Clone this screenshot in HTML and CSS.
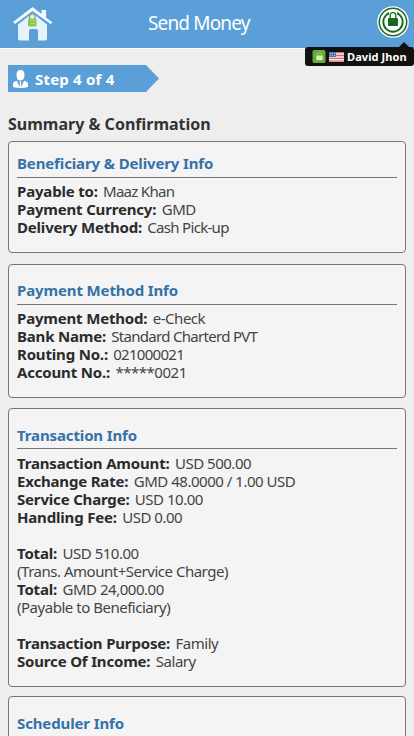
FILE: index.html
```html
<!DOCTYPE html>
<html lang="en">
<head>
<meta charset="utf-8">
<meta name="viewport" content="width=device-width, initial-scale=1">
<title>Send Money</title>
<link rel="stylesheet" href="styles.css">
</head>
<body>
<header class="bar">
  <svg class="home" viewBox="0 0 42 36" aria-label="Home">
    <path d="M6 18.500 20.500 7l14.500 11.500V32.500q0 2-2 2h-7V25q0-2-2-2h-5q-2 0-2 2v9.500H8q-2 0-2-2z" fill="#e6f2fc"/>
    <path d="M1 16 20.500 1 29.500 8V4h4.500v7.500l6.500 5-2 1.500-18-13L3 18z" fill="#f4faff"/>
    <path d="M17.500 13v-2q0-3 2.800-3t2.800 3v2" fill="none" stroke="#8aa58b" stroke-width="1.300"/>
    <rect x="16" y="12.500" width="8.500" height="8" rx="1" fill="#8cc850"/>
    <path d="M18 14.500h5M18 17.500h5" stroke="#a5d66d"/>
  </svg>
  <h1>Send Money</h1>
  <svg class="secure" viewBox="0 0 32 32" aria-label="Secure account">
    <circle cx="16" cy="16" r="15.800" fill="#fff"/>
    <circle cx="16" cy="16" r="13.700" fill="none" stroke="#17691c" stroke-width="1.500"/>
    <circle cx="16" cy="16" r="9.700" fill="none" stroke="#17691c" stroke-width="1.900"/>
    <path d="M12 5h8v9h-8z" fill="#fff"/>
    <rect x="11" y="12" width="10" height="8" rx="1" fill="#17691c"/>
    <path d="M13.200 13V9.500q0-2.800 2.800-2.800t2.800 2.800V13" fill="none" stroke="#17691c" stroke-width="1.300"/>
  </svg>
  <div class="user">
    <svg class="lock" viewBox="0 0 14 14"><rect width="14" height="14" rx="2" fill="#65a936"/><rect x="4" y="6" width="7" height="5" rx="1" fill="#d2f1af"/><path d="M5 6V4q2.500-2 5 0v2" fill="none" stroke="#a4d670"/></svg>
    <svg class="flag" viewBox="0 0 15 10"><path fill="#f3eeee" d="M0 0h15v10H0z"/><path d="M0 .7h15M0 3.500h15M0 6.300h15M0 9.200h15" stroke="#d66b6b" stroke-width="1.300"/><path fill="#5276b8" d="M0 0h7v5H0z"/><path d="M1 1.500h5M1 3.500h5" stroke="#b9c8e6" stroke-width=".7" stroke-dasharray="1 1"/></svg>
    <b>David Jhon</b>
  </div>
</header>
<main>
  <div class="step">
    <svg viewBox="0 0 15 18"><path d="M3.500 5q0-5 4-5t4 5-4 5.500-4-5.500z" fill="#fff"/><path d="M0 17v-3q0-2.500 4-3.300L6.500 17 7 13l-.7-1.500h2.400L8 13l.5 4L11 10.700q4 .8 4 3.300v3q-3 1-7.500 1T0 17z" fill="#fff"/></svg>
    <span>Step 4 of 4</span>
  </div>
  <h2>Summary &amp; Confirmation</h2>
  <section class="card beneficiary">
    <h3>Beneficiary &amp; Delivery Info</h3>
    <p class="tight"><b>Payable to:</b> Maaz Khan</p>
    <p><b>Payment Currency:</b> GMD</p>
    <p class="tight"><b>Delivery Method:</b> Cash Pick-up</p>
  </section>
  <section class="card payment">
    <h3>Payment Method Info</h3>
    <p><b>Payment Method:</b> e-Check</p>
    <p class="tight"><b>Bank Name:</b> Standard Charterd PVT</p>
    <p class="tight"><b>Routing No.:</b> 021000021</p>
    <p><b>Account No.:</b> *****0021</p>
  </section>
  <section class="card transaction">
    <h3>Transaction Info</h3>
    <p><b>Transaction Amount:</b> USD 500.00</p>
    <p><b>Exchange Rate:</b> GMD 48.0000 / 1.00 USD</p>
    <p><b>Service Charge:</b> USD 10.00</p>
    <p><b>Handling Fee:</b> USD 0.00</p>
    <p class="group"><b>Total:</b> USD 510.00</p>
    <p>(Trans. Amount+Service Charge)</p>
    <p><b>Total:</b> GMD 24,000.00</p>
    <p>(Payable to Beneficiary)</p>
    <p class="group"><b>Transaction Purpose:</b> Family</p>
    <p><b>Source Of Income:</b> Salary</p>
  </section>
  <section class="card scheduler">
    <h3>Scheduler Info</h3>
  </section>
</main>
</body>
</html>
```
FILE: styles.css
```css
* { box-sizing: border-box; }
html { height: 100%; overflow: hidden; }
body {
  margin: 0;
  height: 100%;
  overflow: hidden;
  background: #eee;
  color: #333;
  font: 15px/18px "Noto Sans", sans-serif;
}
h1, h2, h3, p { margin: 0; }
.bar {
  position: relative;
  display: flex;
  align-items: flex-start;
  height: 49px;
  padding: 6px 5px 0 12px;
  background: #5b9fd9;
  border-bottom: 1px solid #fff;
}
.home { width: 42px; height: 36px; }
h1 {
  margin-left: 94px;
  color: #fff;
  font-size: 19px;
  font-weight: 400;
  line-height: 34px;
  letter-spacing: -.85px;
}
.secure { width: 32px; height: 32px; margin-left: auto; }
.user {
  position: absolute;
  top: 47px;
  right: 0;
  display: flex;
  align-items: center;
  width: 109px;
  height: 19px;
  padding-left: 7px;
  border-radius: 3px;
  background: #111;
  color: #fff;
  font-size: 11px;
}
.user::before {
  content: "";
  position: absolute;
  top: -5px;
  right: 5px;
  border: solid transparent;
  border-width: 0 5px 5px;
  border-bottom-color: #111;
}
.lock { width: 14px; height: 13px; }
.flag { width: 15px; height: 10px; margin: 0 3px; }
.user b {
  line-height: 19px;
  white-space: nowrap;
  letter-spacing: .1px;
}
main {
  height: calc(100% - 49px);
  padding: 16px 8px 0;
  overflow: hidden;
}
.step {
  display: flex;
  align-items: center;
  width: 151px;
  height: 27px;
  padding-left: 5px;
  background: #5b9fd9;
  clip-path: polygon(0 0, 138px 0, 100% 50%, 138px 100%, 0 100%);
  color: #fff;
  font-weight: 700;
  letter-spacing: .2px;
}
.step svg { width: 15px; height: 18px; margin-right: 7px; }
h2 {
  margin-top: 22px;
  font-size: 16px;
  line-height: 20px;
}
.card {
  padding: 17px 8px 0;
  border: 1px solid #777;
  border-radius: 4px;
  background: #f4f4f4;
}
.beneficiary { height: 112px; margin-top: 7px; padding-top: 12px; }
.payment { height: 134px; margin-top: 11px; padding-top: 16px; }
.transaction { height: 279px; margin-top: 10px; }
.scheduler { height: 134px; margin-top: 9px; }
h3 {
  height: 23px;
  margin-bottom: 5px;
  border-bottom: 1px solid #777;
  color: #3572a8;
  font-size: 15px;
  line-height: 18px;
  letter-spacing: -.13px;
}
.beneficiary h3, .payment h3 { height: 24px; margin-bottom: 4px; }
p { color: #444; letter-spacing: -.48px; }
p.tight { letter-spacing: -.7px; }
p b { margin-right: 2px; color: #2b2b2b; letter-spacing: -.18px; }
.group { margin-top: 18px; }
```
